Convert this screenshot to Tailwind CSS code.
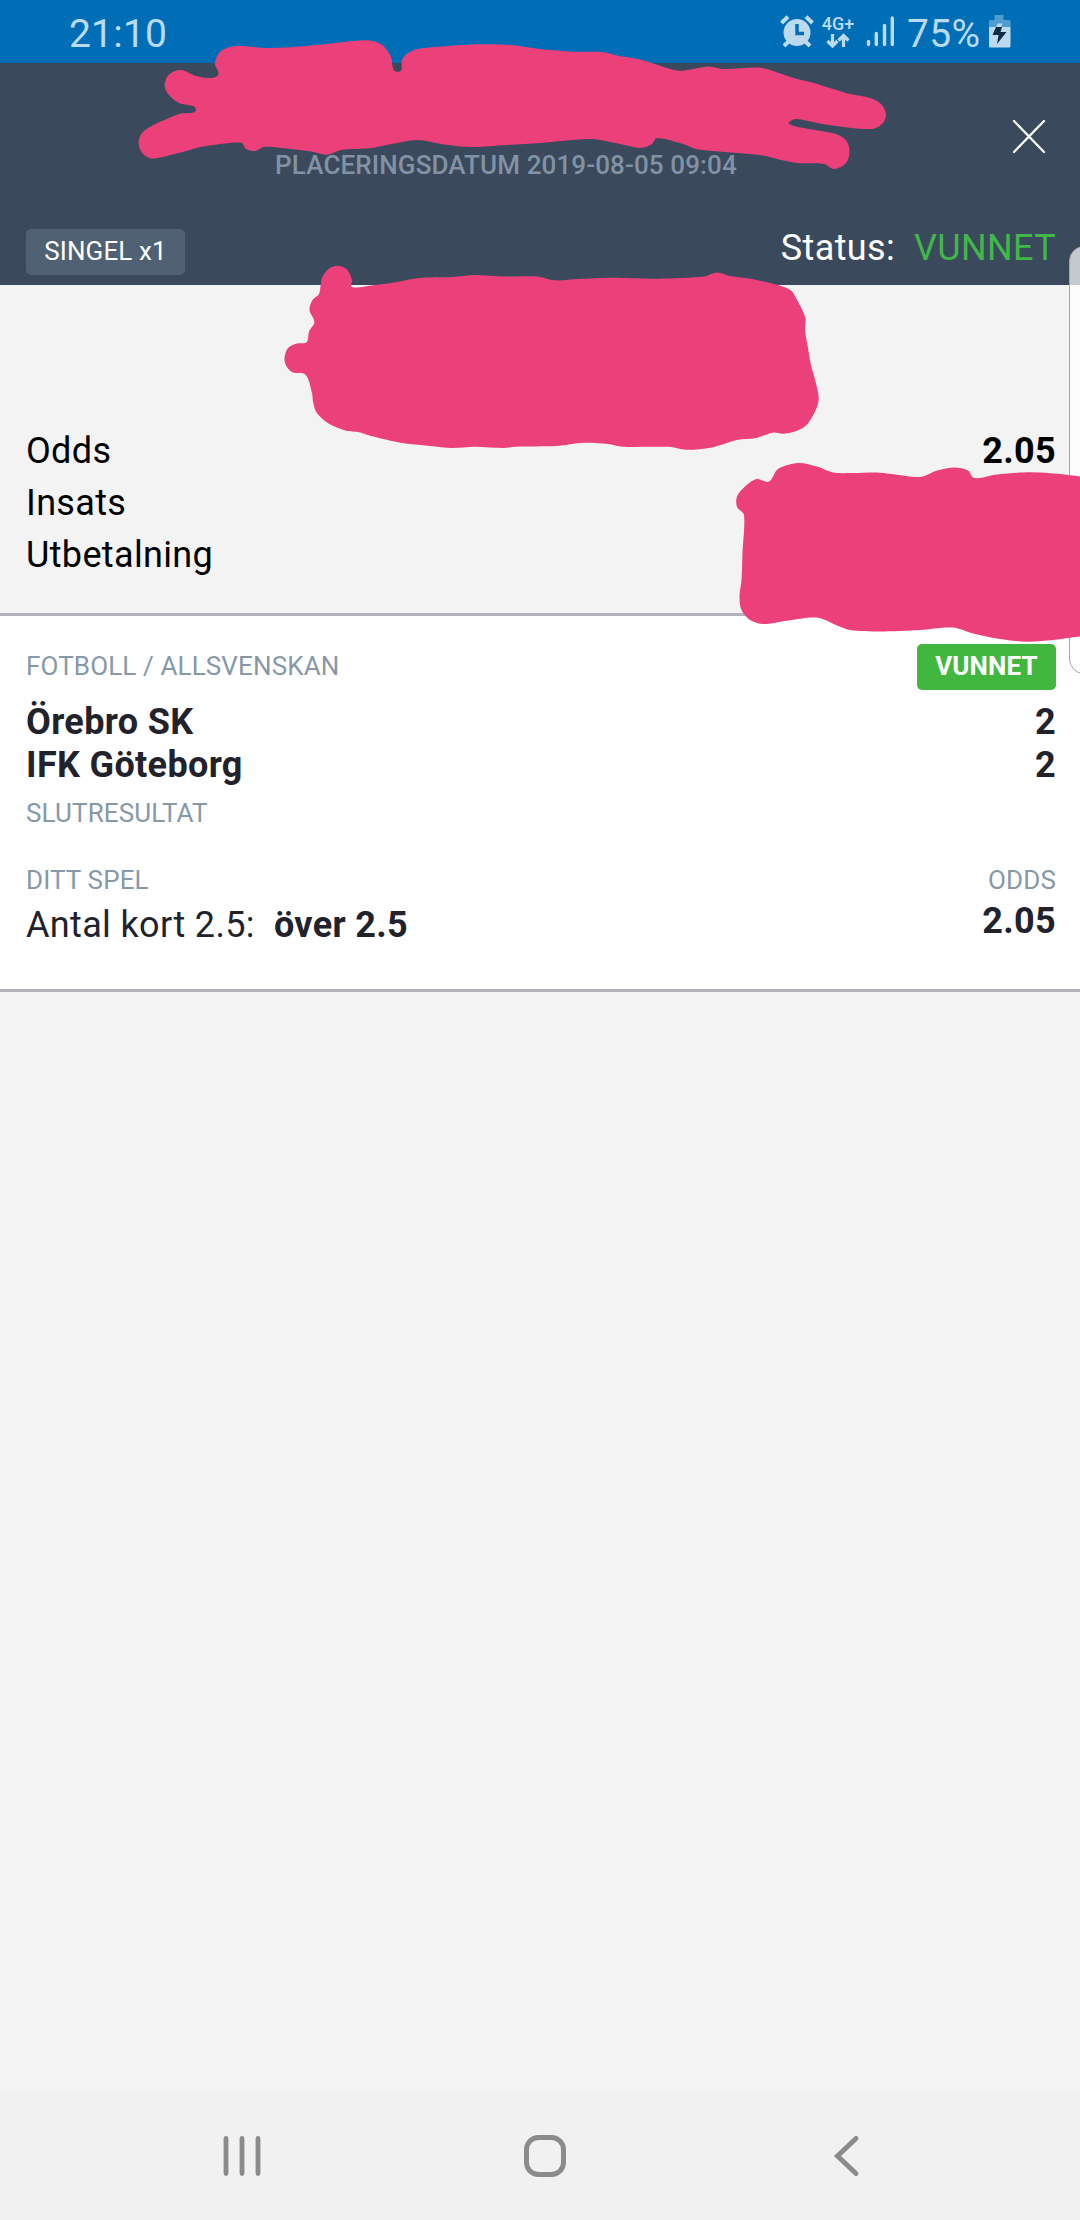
<!DOCTYPE html>
<html lang="sv">
<head>
<meta charset="utf-8">
<title>Spelkupong</title>
<script src="https://cdn.jsdelivr.net/npm/@tailwindcss/browser@4"></script>
</head>
<body class="bg-[#f3f3f3]">
<div class="relative flex h-[2220px] w-[1080px] flex-col overflow-hidden font-['Roboto',sans-serif] text-[36px] tracking-[0.35px] text-black">

  <!-- Status bar -->
  <div class="flex h-[63px] shrink-0 items-center bg-[#006eb6] pl-[69px] text-[#b9daf0]">
    <span class="mt-[6px] text-[39px] leading-none tracking-[0.2px]">21:10</span>
    <div class="ml-auto flex h-full">
      <svg class="h-[63px] w-[34px]" viewBox="780 0 34 63" fill="none" stroke="#bcdaef">
        <circle cx="797" cy="32.500" r="13.500" fill="#bcdaef" stroke="none"/>
        <path d="M781.500 23l6.500-6.200M812.500 23l-6.500-6.200" stroke-width="4"/>
        <path d="M789 41l-5 5M805 41l5 5" stroke-width="4"/>
        <path d="M797 24v9.500h7" stroke="#006eb6" stroke-width="3.500"/>
      </svg>
      <div class="ml-[7px] flex w-[34px] flex-col items-center pt-[15px]">
        <span class="text-[18px] leading-[18px] font-medium tracking-normal">4G+</span>
        <svg class="h-[16px] w-[24px]" viewBox="0 0 24 16" fill="none" stroke="#bcdaef" stroke-width="3.200"><path d="M6.500 1v12M1.500 8l5 5 5-5M17.500 14V3M12.500 7.500l5-5 5 5"/></svg>
      </div>
      <svg class="ml-[11px] h-[63px] w-[28px]" viewBox="866 0 28 63" fill="none" stroke="#b9daf0" stroke-width="3.400" stroke-linecap="round"><path d="M868.500 41.500v3M876.300 33.500v11M884.500 25.500v19M892.300 18v26.500"/></svg>
      <span class="ml-[13px] mt-[6px] w-[72px] self-center text-[39px] leading-none">75%</span>
      <svg class="ml-[10px] mr-[69px] h-[63px] w-[22px]" viewBox="989 0 22 63">
        <path d="M994.500 15h9v5h5.500q1.500 0 1.500 1.500v6h-21.500v-6q0-1.500 1.500-1.500h4z" fill="#4f9dd0"/>
        <path d="M989 27h21.500v19q0 1.500-1.500 1.500h-18.500q-1.500 0-1.500-1.500z" fill="#bcdaef"/>
        <path d="M997.500 23.500h5l-1.500 4h-5z" fill="#bcdaef"/>
        <path d="M996 27h6l-1.500 5h6l-9.500 12 1.500-9h-6z" fill="#102c42"/>
      </svg>
    </div>
  </div>

  <!-- Coupon header -->
  <header class="flex h-[222px] shrink-0 flex-col bg-[#3a4a5c] pr-6 pl-[26px]">
    <div class="flex h-[142px] items-center">
      <p class="mt-[62px] flex-1 pr-[25px] text-center text-[26px] leading-[30px] font-medium tracking-[0.12px] text-[#8292a4]">PLACERINGSDATUM 2019-08-05 09:04</p>
      <svg class="mr-[9px] mt-[4px] h-[36px] w-[36px]" viewBox="0 0 36 36" fill="none" stroke="#fff" stroke-width="2.300" stroke-linecap="round"><path d="M3 3l30 31M33 3L3 34"/></svg>
    </div>
    <div class="mt-[20px] flex items-start justify-between">
      <span class="mt-[4px] flex h-[46px] w-[159px] items-center justify-center rounded-[5px] bg-[#4f6172] pb-[2px] text-[26px] leading-[30px] tracking-[0.12px] text-white">SINGEL x1</span>
      <p class="leading-[46px] text-white">Status:<span class="ml-[19px] text-[#41b649]">VUNNET</span></p>
    </div>
  </header>

  <!-- Summary -->
  <section class="flex h-[331px] shrink-0 flex-col border-b-3 border-[#b1b2ba] pt-[140px] pr-6 pl-[26px] leading-[52px]">
    <div class="flex justify-between"><span>Odds</span><b>2.05</b></div>
    <div>Insats</div>
    <div>Utbetalning</div>
  </section>

  <!-- Event -->
  <section class="flex h-[376px] shrink-0 flex-col border-b-3 border-[#b1b2ba] bg-white pt-[28px] pr-6 pl-[26px] text-[#22222c]">
    <div class="flex h-[46px] items-center justify-between text-[26px] leading-[30px] tracking-[0.13px]">
      <span class="pb-[2px] text-[#8798a9]">FOTBOLL / ALLSVENSKAN</span>
      <span class="flex h-[46px] w-[139px] items-center justify-center rounded-[5px] bg-[#41b73f] pb-[2px] font-bold text-white">VUNNET</span>
    </div>
    <div class="mt-[11px] flex justify-between leading-[43px] font-bold"><span>Örebro SK</span><span>2</span></div>
    <div class="flex justify-between leading-[43px] font-bold"><span>IFK Göteborg</span><span>2</span></div>
    <div class="mt-[11px] text-[26px] leading-[30px] tracking-[0.13px] text-[#8798a9]">SLUTRESULTAT</div>
    <div class="mt-[37px] flex justify-between text-[26px] leading-[30px] tracking-[0.13px] text-[#8798a9]"><span>DITT SPEL</span><span>ODDS</span></div>
    <div class="flex items-start justify-between">
      <span class="mt-2 leading-[44px]">Antal kort 2.5:<b class="ml-[19px]">över 2.5</b></span>
      <b class="mt-1 leading-[44px]">2.05</b>
    </div>
  </section>

  <!-- System navigation -->
  <nav class="mt-auto flex h-[126px] items-center justify-between bg-[#f1f1f1] pr-[219px] pb-[2px] pl-[221px]">
    <svg class="h-[44px] w-[42px]" viewBox="0 0 42 44" stroke="#8b8b8b" stroke-width="4.800" stroke-linecap="round"><path d="M5 4.500v35M21 4.500v35M37 4.500v35"/></svg>
    <svg class="mr-[7px] h-[44px] w-[44px]" viewBox="0 0 44 44" fill="none" stroke="#8b8b8b" stroke-width="5"><rect x="3.500" y="3.500" width="37" height="37" rx="12"/></svg>
    <svg class="h-[44px] w-[28px]" viewBox="0 0 28 44" fill="none" stroke="#8b8b8b" stroke-width="5" stroke-linecap="round"><path d="M23 4.500L4.500 22l18.500 17.500"/></svg>
  </nav>

  <!-- Edge panel handle -->
  <div class="absolute top-[246px] left-[1069px] h-[428px] w-[30px] rounded-[16px] border border-[#a3a5a9] bg-white/70"></div>

  <!-- Marker strokes -->
  <svg id="marker" class="absolute inset-0 h-[700px] w-[1080px]" viewBox="0 0 1080 700" fill="#ec407a"></svg>
</div>
<script>
  const outlines = [
    "215,63 221,51 236,46 269,48 300,46.5 331,43.5 367,40.3 382,45 391,57 394,70.5 401,70.5 402,60 408,53 420,48.5 472,44.5 510,45 540,49 574,51.7 602,52 619,56 640,59.5 674,70 683,70.7 709,66.5 722.5,69 757,67.5 767,69 795,78.5 812,82.5 833,89 850,94 870,98 881,104 886,114 883,123 872,129 836,126 815,122.5 795,119 789,124 815.5,130 836,134 846.5,141 849.5,152 846,163 834,169 824,164 798,163 781,160 760,155 698,149.5 683,144 657,138 652,144 640,148 622.5,144.5 591.6,139 564,140.7 540,143 506,145 472,147 444,144.5 418,140 389,144.5 372,148 341,150 327,154.7 310,151.3 265,146.7 255,151 246,149 241,142.5 203,146.5 182.5,152 153,158.5 143,154 138.5,143 142,133 151.5,126 179,114 196,109.5 179,103 169,95 164.6,85 169.5,74 181,70 196,76 212,78 218.5,74",
    "319,294 322,278 328.5,269 337,265.7 347,269.5 352,280 352,287 371,285.5 397,282 419,278 452,277 474.5,275 504,276.5 537.5,276.5 554,280.3 578,279 611.5,277.7 659.5,278.7 704,276.5 717,272.5 730,276 752,279 778,285 791,290.5 798,301.5 802,309.5 805.5,318.5 805,330 807.5,345 811,365 816,383.5 818.5,401.5 808,423.5 796.5,431 783.5,433.7 772.5,432.7 756,438 737,440 711,447.7 685.5,449.7 671,447 622.5,446.7 608,444 584,442.7 556,446 515,446.7 504,448 474.5,446.7 452,448 430,446 400.5,442.7 371,436 358,432 347,431 328.5,423.5 316.5,412.5 313,401.5 312,393 305.5,374.7 293,372.5 286.5,366.5 284.5,358 288,348 297,343.5 306.6,342.3 309,331.5 314.4,322 309.5,310 312.5,300",
    "744,515 737,507 737,496.5 745,486.5 756.5,479 769,481.5 778,469 798,463 817,466.5 833,472.5 853,473 880,472.7 920,477 937,470.5 955,467.5 968,470.5 974,478 997,474.5 1030,472.3 1060,474 1080,476.5 1100,479 1100,634 1080,636.5 1053,640 1027,641.7 1000,639 973,633.5 953,627.5 920,630 880,631.5 850,630 837,625.5 818,617.7 787,620.7 763,624 750,620 741.5,610 739.5,596.5 741.5,580 742.5,553"
  ];
  const svg = document.getElementById("marker");
  const unit = (a, b) => {
    const len = Math.hypot(b[0] - a[0], b[1] - a[1]) || 1;
    return [(b[0] - a[0]) / len, (b[1] - a[1]) / len];
  };
  // Closed curve through every point; handles scale with the segment's length
  for (const outline of outlines) {
    const p = outline.split(" ").map(s => s.split(",").map(Number));
    const n = p.length;
    let d = `M${p[0]}`;
    for (let i = 0; i < n; i++) {
      const a = p[(i + n - 1) % n], b = p[i], c = p[(i + 1) % n], e = p[(i + 2) % n];
      const h = Math.min(Math.hypot(c[0] - b[0], c[1] - b[1]) * 0.3, 10);
      const s = unit(a, c), t = unit(b, e);
      d += `C${b[0] + s[0] * h},${b[1] + s[1] * h} ${c[0] - t[0] * h},${c[1] - t[1] * h} ${c[0]},${c[1]}`;
    }
    const path = document.createElementNS("http://www.w3.org/2000/svg", "path");
    path.setAttribute("d", d + "Z");
    svg.appendChild(path);
  }
</script>
</body>
</html>
